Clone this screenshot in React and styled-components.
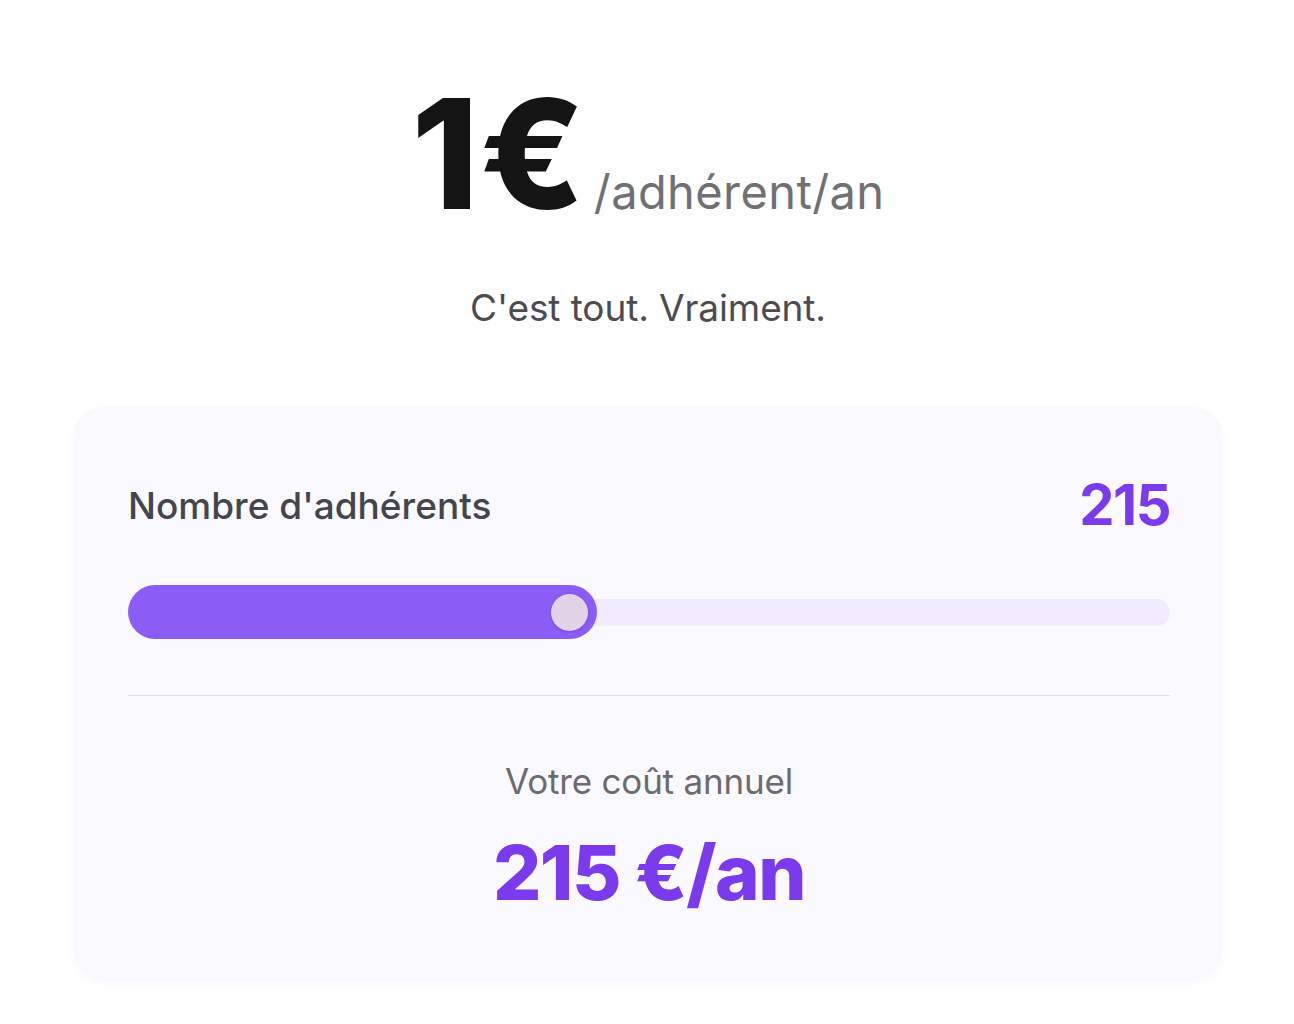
import styled, { createGlobalStyle } from 'styled-components';

const GlobalStyle = createGlobalStyle`
  html, body {
    margin: 0;
    padding: 0;
    background: #ffffff;
    font-family: "Inter", "Noto Sans", sans-serif;
  }
`;

const Page = styled.div`
  width: 1294px;
  height: 1024px;
  box-sizing: border-box;
  padding: 78px 71px 0 73px;
  display: flex;
  flex-direction: column;
  align-items: center;
`;

const PriceRow = styled.div`
  display: flex;
  align-items: baseline;
  justify-content: center;
  gap: 8px;
`;

const BigPrice = styled.span`
  font-size: 152px;
  line-height: 1;
  font-weight: 800;
  letter-spacing: 1px;
  color: #141414;
`;

const PerUnit = styled.span`
  font-size: 47px;
  font-weight: 400;
  color: #707075;
  letter-spacing: 0.4px;
`;

const Tagline = styled.p`
  margin: 55px 0 0;
  font-size: 37px;
  font-weight: 400;
  color: #4b4b50;
  letter-spacing: -0.1px;
`;

const Card = styled.div`
  margin-top: 77px;
  width: 1150px;
  height: 574px;
  box-sizing: border-box;
  padding: 64px 53px 0 55px;
  background: #faf9ff;
  border-radius: 32px;
  box-shadow: 0 2px 6px rgba(120, 100, 180, 0.03);
  display: flex;
  flex-direction: column;
`;

const HeaderRow = styled.div`
  display: flex;
  justify-content: space-between;
  align-items: center;
`;

const Label = styled.span`
  font-size: 37px;
  font-weight: 500;
  color: #45454c;
  letter-spacing: 0;
`;

const Count = styled.span`
  font-size: 56px;
  font-weight: 700;
  color: #7c3aed;
  letter-spacing: -1.5px;
`;

const SliderTrack = styled.div`
  position: relative;
  margin-top: 46px;
  height: 54px;
  display: flex;
  align-items: center;
`;

const TrackRail = styled.div`
  width: 100%;
  height: 27px;
  border-radius: 14px;
  background: #f0ebfe;
`;

const TrackFill = styled.div`
  position: absolute;
  left: 0;
  top: 0;
  height: 54px;
  border-radius: 27px;
  background: #8b5cf6;
  display: flex;
  align-items: center;
  justify-content: flex-end;
  padding-right: 9px;
  box-sizing: border-box;
`;

const Thumb = styled.div`
  width: 37px;
  height: 37px;
  border-radius: 50%;
  background: #e3d3e8;
  box-shadow: 0 1px 3px rgba(60, 20, 120, 0.25);
`;

const Divider = styled.hr`
  margin: 56px 0 0;
  border: none;
  height: 1px;
  background: #e2e1e8;
`;

const TotalBlock = styled.div`
  margin-top: 64px;
  display: flex;
  flex-direction: column;
  align-items: center;
`;

const TotalLabel = styled.span`
  font-size: 35px;
  font-weight: 400;
  color: #6b6b70;
  letter-spacing: -0.2px;
`;

const TotalValue = styled.span`
  margin-top: 24px;
  font-size: 76px;
  font-weight: 800;
  color: #7c3aed;
  letter-spacing: -1.5px;
`;

export default function App() {
  const members = 215;
  const fillPct = 45;
  return (
    <>
      <GlobalStyle />
      <Page>
        <PriceRow>
          <BigPrice>1€</BigPrice>
          <PerUnit>/adhérent/an</PerUnit>
        </PriceRow>
        <Tagline>C'est tout. Vraiment.</Tagline>
        <Card>
          <HeaderRow>
            <Label>Nombre d'adhérents</Label>
            <Count>{members}</Count>
          </HeaderRow>
          <SliderTrack>
            <TrackRail />
            <TrackFill style={{ width: `${fillPct}%` }}>
              <Thumb />
            </TrackFill>
          </SliderTrack>
          <Divider />
          <TotalBlock>
            <TotalLabel>Votre coût annuel</TotalLabel>
            <TotalValue>{members} €/an</TotalValue>
          </TotalBlock>
        </Card>
      </Page>
    </>
  );
}
